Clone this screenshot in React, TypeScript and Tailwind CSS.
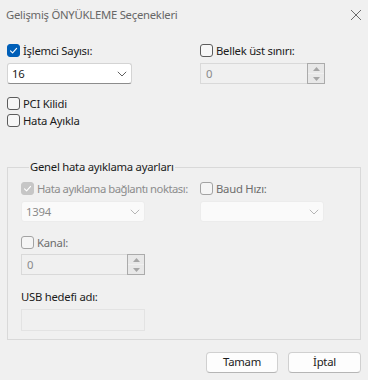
import React from 'react';

type CheckProps = {
  label: string;
  checked?: boolean;
  disabled?: boolean;
  tight?: boolean;
};

function CheckBox({ label, checked, disabled, tight }: CheckProps) {
  let box = 'border border-[#5c5c5c] bg-[#f7f7f7]';
  if (checked && !disabled) box = 'bg-[#005fb8] border border-[#005fb8]';
  if (checked && disabled) box = 'bg-[#c6c6c6] border border-[#c6c6c6]';
  if (!checked && disabled) box = 'border border-[#a3a3a3] bg-[#f5f5f5]';
  const text = disabled ? (checked ? 'text-[#8d8d8d]' : 'text-[#6d6d6d]') : 'text-[#1b1b1b]';
  return (
    <div className="flex h-[13px] items-center whitespace-nowrap">
      <span className={`flex h-[13px] w-[13px] shrink-0 items-center justify-center rounded-[3px] ${box}`}>
        {checked && (
          <svg width="11" height="11" viewBox="0 0 11 11" fill="none">
            <path d="M2.5 5.8 L4.6 7.9 L8.6 3.4" stroke="white" strokeWidth="1.1" strokeLinecap="round" strokeLinejoin="round" />
          </svg>
        )}
      </span>
      <span className={`ml-[3px] leading-none ${text} ${tight ? 'tracking-[-0.5px]' : ''}`}>{label}</span>
    </div>
  );
}

function Chevron({ color }: { color: string }) {
  return (
    <svg width="10" height="6" viewBox="0 0 10 6" fill="none">
      <path d="M0.8 0.8 L5 5 L9.2 0.8" stroke={color} strokeWidth="1" />
    </svg>
  );
}

function Select({ value, disabled, width }: { value: string; disabled?: boolean; width: string }) {
  return (
    <div
      className={`flex h-[21px] ${width} items-center justify-between rounded-[3px] pl-[4px] pr-[4px] ${
        disabled
          ? 'border border-[#ececec] bg-[#fafafa] text-[#8a8a8a]'
          : 'border border-[#d4d4d4] border-b-[#8c8c8c] bg-white text-[#1b1b1b]'
      }`}
    >
      <span className="leading-none">{value}</span>
      <Chevron color={disabled ? '#b5b5b5' : '#606060'} />
    </div>
  );
}

function SpinArrow({ up }: { up?: boolean }) {
  return (
    <div className="flex h-[9px] w-full items-center justify-center bg-[#e8e8e8]">
      <svg width="7" height="4" viewBox="0 0 7 4">
        <path d={up ? 'M0 4 L3.5 0 L7 4 Z' : 'M0 0 L3.5 4 L7 0 Z'} fill="#a6a6a6" />
      </svg>
    </div>
  );
}

function Spin({ width }: { width: string }) {
  return (
    <div className={`flex h-[21px] ${width} items-stretch border border-[#d9d9d9] bg-[#f0f0f0]`}>
      <span className="flex-1 pl-[5px] leading-[19px] text-[#8a8a8a]">0</span>
      <div className="-my-px -mr-px flex w-[18px] flex-col justify-between border border-[#ababab] bg-[#f0f0f0]">
        <SpinArrow up />
        <SpinArrow />
      </div>
    </div>
  );
}

export default function App() {
  return (
    <div className="flex h-[380px] w-[368px] flex-col bg-[#f0f0f0] font-['Noto_Sans',sans-serif] text-[11.3px] tracking-[-0.25px] text-[#1b1b1b]">
      <div className="flex h-[30px] items-center justify-between pl-[6px] pr-[6px]">
        <span className="text-[#676767]">Gelişmiş ÖNYÜKLEME Seçenekleri</span>
        <svg width="12" height="12" viewBox="0 0 12 12" fill="none">
          <path d="M1 1 L11 11 M11 1 L1 11" stroke="#6b6b6b" strokeWidth="1" />
        </svg>
      </div>

      <div className="flex pl-[7px] pt-[14px]">
        <div className="flex w-[193px] flex-col">
          <CheckBox label="İşlemci Sayısı:" checked />
          <div className="mt-[6px]">
            <Select value="16" width="w-[125px]" />
          </div>
          <div className="mt-[13px]">
            <CheckBox label="PCI Kilidi" />
          </div>
          <div className="mt-[4px]">
            <CheckBox label="Hata Ayıkla" />
          </div>
        </div>
        <div className="flex flex-col">
          <CheckBox label="Bellek üst sınırı:" />
          <div className="mt-[6px]">
            <Spin width="w-[125px]" />
          </div>
        </div>
      </div>

      <fieldset className="mx-[7px] mt-[32px] border border-[#d9d9d9] pb-[8px] pl-[13px]">
        <legend className="ml-[8px] px-[1px] leading-[16px] text-[#1b1b1b]">Genel hata ayıklama ayarları</legend>
        <div className="flex pt-[7px]">
          <div className="flex w-[179px] flex-col">
            <CheckBox label="Hata ayıklama bağlantı noktası:" checked disabled tight />
            <div className="mt-[6px]">
              <Select value="1394" width="w-[124px]" disabled />
            </div>
            <div className="mt-[14px]">
              <CheckBox label="Kanal:" disabled />
            </div>
            <div className="mt-[5px]">
              <Spin width="w-[124px]" />
            </div>
            <span className="mt-[14px] leading-[16px] text-[#1b1b1b]">USB hedefi adı:</span>
            <div className="mt-[4px] h-[22px] w-[124px] border border-[#e3e3e3] bg-[#f0f0f0]" />
          </div>
          <div className="flex flex-col">
            <CheckBox label="Baud Hızı:" disabled />
            <div className="mt-[6px]">
              <Select value="" width="w-[124px]" disabled />
            </div>
          </div>
        </div>
      </fieldset>

      <div className="mt-[12px] flex justify-end gap-[10px] pr-[7px]">
        <button className="h-[21px] w-[72px] rounded-[4px] border border-[#d0d0d0] border-b-[#b5b5b5] bg-[#fdfdfd] text-[#1b1b1b]">
          Tamam
        </button>
        <button className="h-[21px] w-[73px] rounded-[4px] border border-[#d0d0d0] border-b-[#b5b5b5] bg-[#fdfdfd] text-[#1b1b1b]">
          İptal
        </button>
      </div>
    </div>
  );
}
